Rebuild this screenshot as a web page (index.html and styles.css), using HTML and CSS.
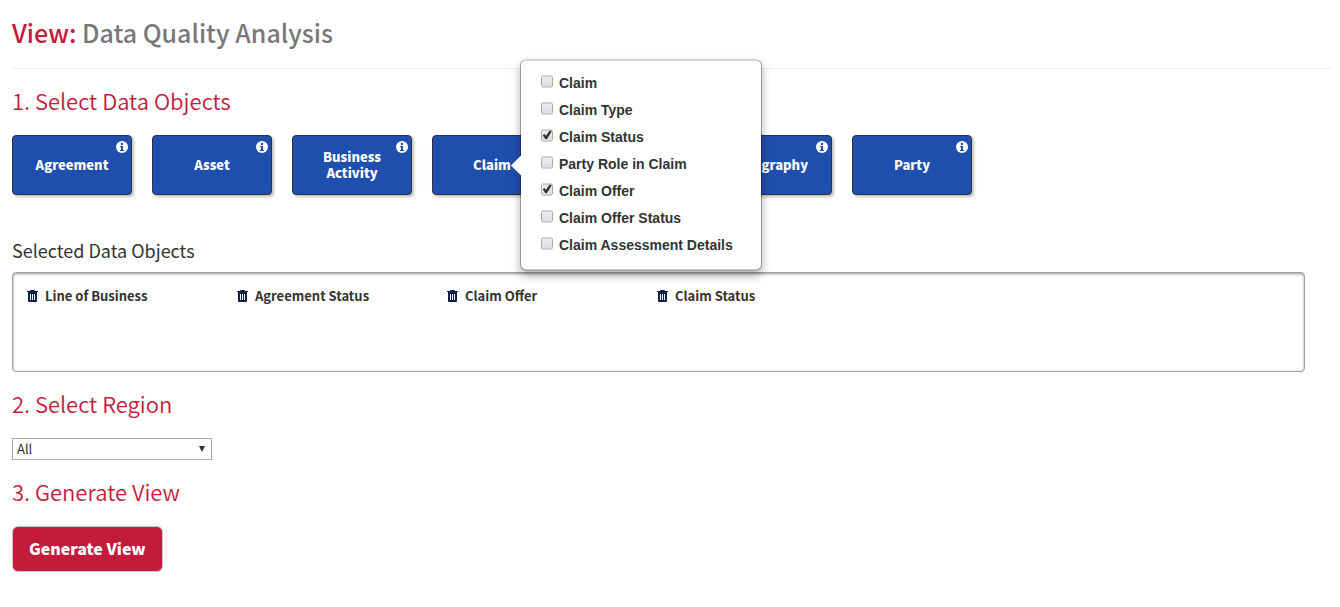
FILE: index.html
```html
<!DOCTYPE html>
<html lang="en">
<head>
<meta charset="utf-8">
<title>Data Quality Analysis</title>
<meta name="viewport" content="width=device-width, initial-scale=1">
<link rel="stylesheet" href="styles.css">
</head>
<body>
<svg class="sprite" aria-hidden="true">
  <symbol id="info" viewBox="0 0 12 12">
    <circle cx="6" cy="6" r="6" fill="#fff"/>
    <path d="M5 2h2v2H5zM4 5h3v4h1v1H4V9h1V6H4z" fill="#1f4fae"/>
  </symbol>
  <symbol id="trash" viewBox="0 0 11 12">
    <path fill-rule="evenodd" d="M3 1Q3 0 4 0h3q1 0 1 1h3v1H0V1zM1 2h9v9q0 1-1 1H2q-1 0-1-1zM3 4V10h1V4zM5 4V10h1V4zM7 4V10h1V4z" fill="#0b1f4b"/>
  </symbol>
</svg>
<main class="page">
  <h1 class="title"><span class="title-accent">View:</span> Data Quality Analysis</h1>

  <section>
    <h2 class="step">1. Select Data Objects</h2>
    <div class="tiles">
      <div class="tile-slot"><button class="tile" type="button">Agreement<svg class="tile-info"><use href="#info"/></svg></button></div>
      <div class="tile-slot"><button class="tile" type="button">Asset<svg class="tile-info"><use href="#info"/></svg></button></div>
      <div class="tile-slot"><button class="tile" type="button">Business Activity<svg class="tile-info"><use href="#info"/></svg></button></div>
      <div class="tile-slot">
        <button class="tile" type="button">Claim<svg class="tile-info"><use href="#info"/></svg></button>
        <div class="popover">
          <label class="option"><input class="check" type="checkbox">Claim</label>
          <label class="option"><input class="check" type="checkbox">Claim Type</label>
          <label class="option"><input class="check" type="checkbox" checked>Claim Status</label>
          <label class="option"><input class="check" type="checkbox">Party Role in Claim</label>
          <label class="option"><input class="check" type="checkbox" checked>Claim Offer</label>
          <label class="option"><input class="check" type="checkbox">Claim Offer Status</label>
          <label class="option"><input class="check" type="checkbox">Claim Assessment Details</label>
        </div>
      </div>
      <div class="tile-slot"><button class="tile" type="button"><svg class="tile-info"><use href="#info"/></svg></button></div>
      <div class="tile-slot"><button class="tile" type="button">Geography<svg class="tile-info"><use href="#info"/></svg></button></div>
      <div class="tile-slot"><button class="tile" type="button">Party<svg class="tile-info"><use href="#info"/></svg></button></div>
    </div>
    <h3 class="subtitle">Selected Data Objects</h3>
    <ul class="selected">
      <li class="selected-item"><button class="remove" type="button"><svg class="trash"><use href="#trash"/></svg></button>Line of Business</li>
      <li class="selected-item"><button class="remove" type="button"><svg class="trash"><use href="#trash"/></svg></button>Agreement Status</li>
      <li class="selected-item"><button class="remove" type="button"><svg class="trash"><use href="#trash"/></svg></button>Claim Offer</li>
      <li class="selected-item"><button class="remove" type="button"><svg class="trash"><use href="#trash"/></svg></button>Claim Status</li>
    </ul>
  </section>

  <section>
    <h2 class="step"><label for="region">2. Select Region</label></h2>
    <div class="select-wrap">
      <select class="select" id="region"><option>All</option></select>
    </div>
  </section>

  <section>
    <h2 class="step">3. Generate View</h2>
    <button class="generate" type="button">Generate View</button>
  </section>
</main>
</body>
</html>
```
FILE: styles.css
```css
* { box-sizing: border-box; }

body {
  margin: 0;
  background: #fff;
  color: #333;
  font-family: "Noto Sans CJK SC", "Noto Sans", sans-serif;
}

button, select { font-family: inherit; }

.sprite { position: absolute; width: 0; height: 0; }

.page { padding: 16px 9px 16px 12px; }

.title {
  margin: 0;
  padding-bottom: 20px;
  border-bottom: 1px solid #eee;
  font-size: 25px;
  font-weight: 500;
  line-height: 32px;
  color: #77787b;
}

.title-accent { color: #c41a3b; }

.step {
  margin: 18px 0 22px;
  font-size: 22px;
  font-weight: 350;
  line-height: 26px;
  color: #c41a3b;
}

.tiles { display: flex; gap: 20px; }

.tile-slot { position: relative; }

.tile {
  position: relative;
  display: flex;
  align-items: center;
  justify-content: center;
  width: 120px;
  height: 60px;
  padding: 0 24px;
  border: 1px solid #333;
  border-radius: 4px;
  background: #1f4fae;
  box-shadow: 2px 2px 3px rgba(0, 0, 0, .25);
  color: #fff;
  font-size: 13px;
  font-weight: 900;
  line-height: 16px;
}

.tile-info {
  position: absolute;
  top: 5px;
  right: 3px;
  width: 12px;
  height: 12px;
}

.popover {
  position: absolute;
  z-index: 1;
  top: 50%;
  left: 88px;
  width: max-content;
  padding: 9px 28px 11px 20px;
  transform: translateY(-50%);
  border: 1px solid rgba(0, 0, 0, .3);
  border-radius: 6px;
  background: #fff;
  background-clip: padding-box;
  box-shadow: 0 5px 10px rgba(0, 0, 0, .3);
}

.popover::before {
  content: "";
  position: absolute;
  top: 50%;
  right: 100%;
  border: 10px solid transparent;
  border-left-width: 0;
  border-right-color: #fff;
  transform: translateY(-50%);
}

.option {
  display: flex;
  align-items: center;
  gap: 6px;
  font-family: "Liberation Sans", Arial, sans-serif;
  font-size: 14px;
  font-weight: 700;
  line-height: 27px;
}

.check {
  appearance: none;
  width: 12px;
  height: 12px;
  margin: 0 0 4px;
  border: 1px solid #a8a8a8;
  border-radius: 2px;
  background: linear-gradient(#eee, #dcdcdc);
}

.check:checked::before {
  content: "";
  display: block;
  height: 10px;
  background: #333;
  clip-path: polygon(8% 52%, 24% 40%, 40% 58%, 78% 2%, 98% 12%, 48% 92%, 34% 92%);
}

.subtitle {
  margin: 42px 0 9px;
  font-size: 18px;
  font-weight: 400;
  line-height: 26px;
}

.selected {
  display: flex;
  flex-wrap: wrap;
  align-content: flex-start;
  min-height: 100px;
  margin: 0 26px 0 0;
  padding: 13px 14px;
  border: 1px solid #a0a0a0;
  border-radius: 4px;
  box-shadow: inset 0 1px 3px rgba(0, 0, 0, .4);
  list-style: none;
}

.selected-item {
  display: flex;
  align-items: center;
  gap: 7px;
  width: 210px;
  font-size: 13px;
  font-weight: 700;
  line-height: 20px;
}

.remove {
  display: flex;
  padding: 0;
  border: 0;
  background: none;
}

.trash { width: 11px; height: 12px; }

.select-wrap { position: relative; width: 200px; }

.select {
  display: block;
  appearance: none;
  width: 100%;
  height: 22px;
  padding: 0 4px;
  border: 1px solid #a9a9a9;
  border-radius: 0;
  background: #fff;
  color: #333;
  font-size: 13px;
  line-height: 20px;
}

.select-wrap::after {
  content: "";
  position: absolute;
  top: 8px;
  right: 7px;
  border: 3px solid transparent;
  border-top: 6px solid #333;
  border-bottom: 0;
  pointer-events: none;
}

.generate {
  display: block;
  height: 46px;
  padding: 0 16px 2px;
  border: 1px solid #ccc;
  border-radius: 6px;
  background: #c41a3b;
  color: #fff;
  font-size: 16px;
  font-weight: 900;
  line-height: 24px;
}
```
